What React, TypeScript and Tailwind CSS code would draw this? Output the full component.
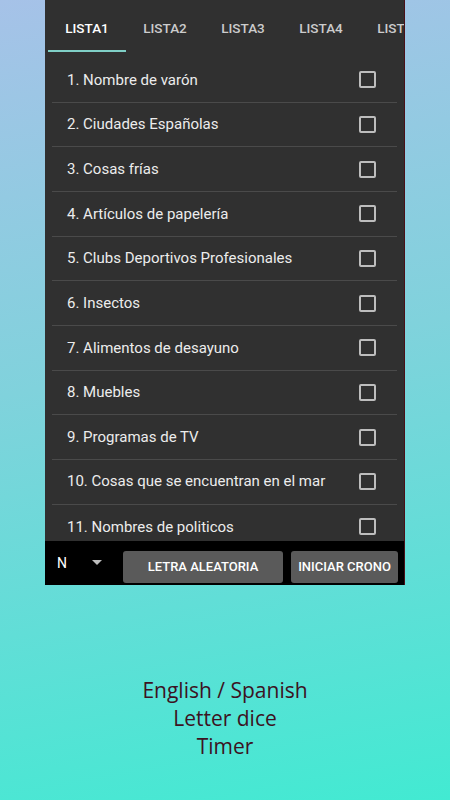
const lists = [
  '1. Nombre de varón',
  '2. Ciudades Españolas',
  '3. Cosas frías',
  '4. Artículos de papelería',
  '5. Clubs Deportivos Profesionales',
  '6. Insectos',
  '7. Alimentos de desayuno',
  '8. Muebles',
  '9. Programas de TV',
  '10. Cosas que se encuentran en el mar',
  '11. Nombres de politicos',
];

const tabs = ['LISTA1', 'LISTA2', 'LISTA3', 'LISTA4', 'LISTA5'];

export default function App() {
  return (
    <div
      className="w-[450px] h-[800px] flex flex-col bg-[linear-gradient(170deg,#a6c2e8_0%,#80d2dc_45%,#42ead2_100%)]"
      style={{ fontFamily: 'Roboto, "Liberation Sans", sans-serif' }}
    >
      <div className="ml-[45px] w-[360px] h-[585px] bg-[#303030] border-r border-[#4a1018] flex flex-col overflow-hidden">
        {/* tabs */}
        <div className="h-[52px] flex pl-[3px] overflow-hidden shrink-0">
          {tabs.map((t, i) => (
            <div
              key={t}
              className={`w-[78px] shrink-0 flex flex-col ${i === 0 ? 'text-white' : 'text-[#cccccc]'}`}
            >
              <div className="flex-1 flex items-center justify-center pt-[6px] text-[13.5px] font-medium">{t}</div>
              <div className={`h-[2px] ${i === 0 ? 'bg-[#7fcfc6]' : ''}`} />
            </div>
          ))}
        </div>
        {/* list */}
        <div className="flex-1 overflow-hidden pt-[6px] mx-[7px]">
          {lists.map((l, i) => (
            <div
              key={l}
              className={`h-[44.67px] flex items-center justify-between pl-[15px] pr-[21px] ${i < lists.length - 1 ? 'border-b border-[#4a4a4a]' : ''}`}
            >
              <span className="text-[15px] text-[#ececec]">{l}</span>
              <span className="w-[17px] h-[17px] border-2 border-[#bdbdbd] rounded-[2px]" />
            </div>
          ))}
        </div>
        {/* bottom bar */}
        <div className="h-[44px] shrink-0 bg-black flex items-center">
          <span className="ml-[12px] text-white text-[14px]">N</span>
          <svg className="ml-[25px]" width="10" height="6" viewBox="0 0 10 6">
            <path d="M0 0 L10 0 L5 5 Z" fill="#bdbdbd" />
          </svg>
          <button className="ml-[21px] mt-[8px] w-[160px] h-[32px] bg-[#5a5a5a] rounded-[3px] text-white text-[13px] font-medium">
            LETRA ALEATORIA
          </button>
          <button className="ml-[8px] mt-[8px] w-[107px] h-[32px] bg-[#5a5a5a] rounded-[3px] text-white text-[13px] font-medium">
            INICIAR CRONO
          </button>
        </div>
      </div>
      <div
        className="mt-[91px] flex flex-col items-center text-[21px] leading-[28px] text-[#3c1222]"
        style={{ fontFamily: '"Open Sans", sans-serif' }}
      >
        <span>English / Spanish</span>
        <span>Letter dice</span>
        <span>Timer</span>
      </div>
    </div>
  );
}
